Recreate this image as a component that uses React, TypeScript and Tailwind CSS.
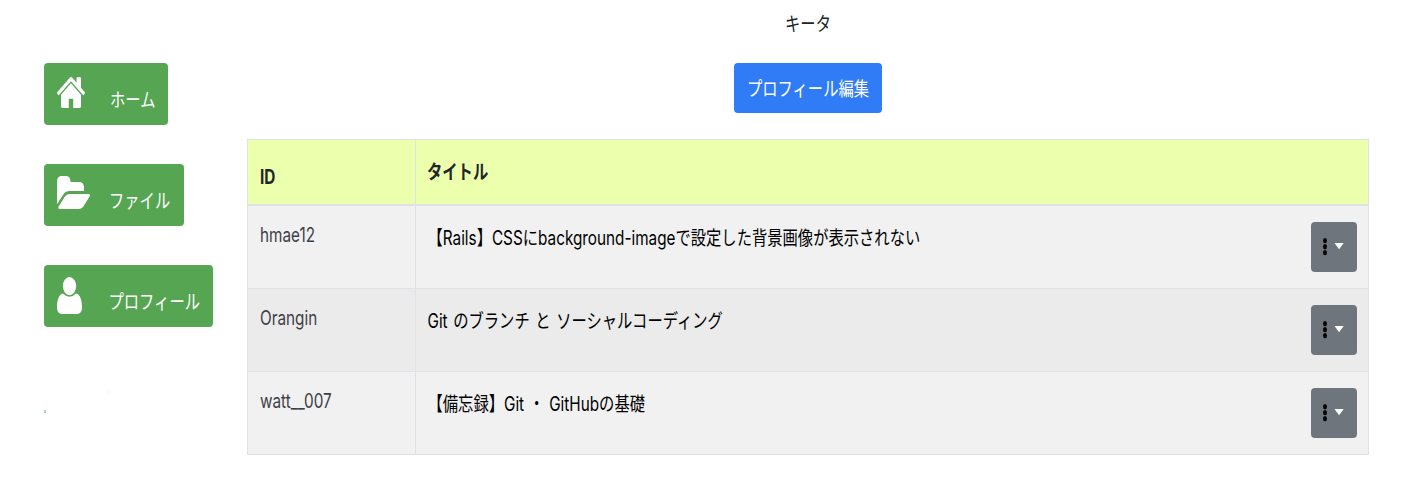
import type { ReactNode } from "react";

function Tall({ children, className = "" }: { children: ReactNode; className?: string }) {
  return (
    <span className={`inline-block origin-center scale-y-[1.3] whitespace-pre text-[15.3px] leading-6 ${className}`}>
      {children}
    </span>
  );
}

function HomeIcon() {
  return (
    <svg className="h-[31px] w-7" viewBox="89 250 1614 1286" preserveAspectRatio="none" fill="currentColor" aria-hidden="true">
      <path d="M1472 992v480q0 26-19 45t-45 19h-384v-384h-256v384h-384q-26 0-45-19t-19-45v-480q0-1 .5-3t.5-3l575-474 575 474q1 2 1 6zm223-69l-62 74q-8 9-21 11h-3q-13 0-21-7l-692-577-692 577q-12 8-24 7-13-2-21-11l-62-74q-8-10-7-23.5t11-21.5l719-599q32-26 76-26t76 26l244 204v-195q0-14 9-23t23-9h192q14 0 23 9t9 23v408l219 182q10 8 11 21.5t-7 23.5z" />
    </svg>
  );
}

function FolderIcon() {
  return (
    <svg className="h-[33px] w-[33px]" viewBox="0 128 1879 1408" preserveAspectRatio="none" fill="currentColor" aria-hidden="true">
      <path d="M1879 952q0 31-31 66l-336 396q-43 51-120.5 86.5t-143.5 35.5h-1088q-34 0-60.5-13t-26.5-43q0-31 31-66l336-396q43-51 120.5-86.5t143.5-35.5h1088q34 0 60.5 13t26.5 43zm-343-344v160h-832q-94 0-197 47.5t-164 119.5l-337 396-5 6q0-4-.5-12.5t-.5-12.5v-960q0-92 66-158t158-66h320q92 0 158 66t66 158v32h544q92 0 158 66t66 158z" />
    </svg>
  );
}

function UserIcon() {
  return (
    <svg className="h-[37px] w-[25px]" viewBox="0 0 75 110" preserveAspectRatio="none" fill="currentColor" aria-hidden="true">
      <ellipse cx="37.5" cy="27" rx="20" ry="27" />
      <path d="M18 49Q37.500 69 57 49C70 51 75 70 75 91Q75 110 60 110H15Q0 110 0 91C0 70 5 51 18 49Z" />
    </svg>
  );
}

const navButton = "flex h-[62px] items-start rounded-[4px] bg-[#55a552] pl-[13px] text-white";

const rows = [
  { id: "hmae12", title: "【Rails】CSSにbackground-imageで設定した背景画像が表示されない", spacing: "" },
  { id: "Orangin", title: "Git のブランチ と ソーシャルコーディング", spacing: "[word-spacing:1.3px]" },
  { id: "watt__007", title: "【備忘録】Git ・ GitHubの基礎", spacing: "[word-spacing:0.6px]" },
];

export default function App() {
  return (
    <div className="flex h-[486px] w-[1408px] overflow-hidden bg-white font-[Inter,'Noto_Sans_CJK_JP',sans-serif] text-[#212529]">
      <nav className="flex w-[247px] shrink-0 flex-col items-start pl-[44px] pt-[63px]">
        <button className={`${navButton} w-[124px]`}>
          <span className="w-[53px] pt-[14px] text-left"><HomeIcon /></span>
          <Tall className="mt-[25px]">ホーム</Tall>
        </button>
        <button className={`${navButton} mt-[39px] w-[140px]`}>
          <span className="w-[52px] pt-[12px] text-left"><FolderIcon /></span>
          <Tall className="mt-[26px]">ファイル</Tall>
        </button>
        <button className={`${navButton} mt-[39px] w-[169px]`}>
          <span className="w-[51.500px] pt-[12px] text-left"><UserIcon /></span>
          <Tall className="mt-[26px]">プロフィール</Tall>
        </button>
        <div className="mt-[63px] flex w-[66px] items-end justify-between">
          <span className="mt-[20px] h-[3px] w-[2px] bg-[#add4ad]" />
          <span className="mb-[20px] size-[2px] bg-[#f4f4f4]" />
        </div>
      </nav>

      <main className="flex w-[1122px] shrink-0 flex-col items-center pt-[12px]">
        <Tall>キータ</Tall>
        <button className="mt-[27px] flex h-[50px] w-[148px] items-center justify-center rounded-[4px] bg-[#307cf6] pt-px text-white">
          <Tall>プロフィール編集</Tall>
        </button>

        <div className="mt-[26px] w-full border border-[#dee2e6]">
          <div className="flex h-[66px] border-b-2 border-[#dee2e6] bg-[#ebffac]">
            <div className="w-[168px] border-r border-[#dee2e6] pl-3 pt-[25px] font-bold"><Tall>ID</Tall></div>
            <div className="pl-[11px] pt-5 font-semibold"><Tall>タイトル</Tall></div>
          </div>
          {rows.map((row, i) => (
            <div
              key={row.id}
              className={`flex border-[#dee2e6] ${i === 1 ? "bg-[#ebebeb]" : "bg-[#f1f1f1]"} ${i === 2 ? "h-[82px]" : "h-[83px] border-b"}`}
            >
              <div className="w-[168px] shrink-0 border-r border-[#dee2e6] pl-3 pt-[17px] text-[#3c4045]"><Tall>{row.id}</Tall></div>
              <div className="flex flex-1 items-start justify-between pl-[11.500px] pr-[11px]">
                <Tall className={`mt-[21px] text-black ${row.spacing}`}>{row.title}</Tall>
                <button aria-label="メニュー" className="mt-[16px] flex h-[50px] w-[46px] items-start rounded-[4px] bg-[#6e757c]">
                  <svg className="h-[50px] w-[46px]" viewBox="0 0 46 50" aria-hidden="true">
                    <ellipse cx="14" cy="18.600" rx="2" ry="2.700" fill="#000" />
                    <ellipse cx="14" cy="24.600" rx="2" ry="2.700" fill="#000" />
                    <ellipse cx="14" cy="30.600" rx="2" ry="2.700" fill="#000" />
                    <path d="M23.500 21h9.200l-4.600 6.200z" fill="#fff" />
                  </svg>
                </button>
              </div>
            </div>
          ))}
        </div>
      </main>
    </div>
  );
}
